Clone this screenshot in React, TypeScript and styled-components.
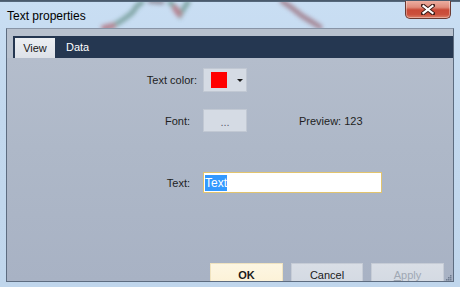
import React from "react";
import styled, { createGlobalStyle } from "styled-components";

const GlobalStyle = createGlobalStyle`
  html, body { margin: 0; padding: 0; }
  body {
    font-family: "Liberation Sans", Arial, sans-serif;
    background: #c3d9ef;
  }
`;

const Window = styled.div`
  width: 460px;
  height: 287px;
  display: flex;
  flex-direction: column;
  background: linear-gradient(180deg, #c9def3 0%, #c2d8ee 40%, #c0d6ec 100%);
  border-top: 1px solid #4a5a6c;
  box-sizing: border-box;
  overflow: hidden;
`;

const TitleBar = styled.div`
  position: relative;
  height: 27px;
  display: flex;
  align-items: center;
  padding: 0 0 0 7px;
  font-size: 12px;
  color: #000;
`;

const Title = styled.span`
  position: relative;
  z-index: 1;
  margin-top: 2px;
`;

const Backdrop = styled.svg`
  position: absolute;
  left: 0;
  top: 0;
  width: 460px;
  height: 27px;
  pointer-events: none;
`;

const CloseButton = styled.div`
  position: absolute;
  right: 9px;
  top: -1px;
  width: 44px;
  height: 18px;
  border: 1px solid #6b3a32;
  border-top: none;
  border-radius: 0 0 5px 5px;
  background: linear-gradient(180deg, #eeb3a6 0%, #e08c7b 40%, #c94a37 55%, #cb503c 80%, #dc8068 100%);
  box-shadow: inset 0 0 0 1px rgba(255, 255, 255, 0.35);
  display: flex;
  align-items: center;
  justify-content: center;
`;

const Frame = styled.div`
  flex: 1;
  display: flex;
  padding: 0 6px 5px 6px;
  min-height: 0;
`;

const Client = styled.div`
  flex: 1;
  display: flex;
  flex-direction: column;
  border: 1px solid #5d6c80;
  border-top-color: #8894a6;
  min-height: 0;
`;

const TabHeader = styled.div`
  background: #b8c1ce;
  padding: 7px 0 0 6px;
`;

const TabBand = styled.div`
  height: 22px;
  background: #253751;
  display: flex;
  align-items: flex-end;
  padding-left: 2px;
`;

const Tab = styled.div<{ $active?: boolean }>`
  height: ${(p) => (p.$active ? "20px" : "22px")};
  width: ${(p) => (p.$active ? "40px" : "auto")};
  padding: ${(p) => (p.$active ? "0" : "0 0 0 11px")};
  display: flex;
  align-items: center;
  justify-content: center;
  font-size: 11px;
  color: ${(p) => (p.$active ? "#151515" : "#ffffff")};
  background: ${(p) => (p.$active ? "linear-gradient(180deg, #eceff3 0%, #dde1e8 100%)" : "transparent")};
  box-sizing: border-box;
`;

const Panel = styled.div`
  flex: 1;
  display: flex;
  flex-direction: column;
  background: linear-gradient(180deg, #b4bdcc 0%, #aeb8c8 40%, #a8b2c4 100%);
  overflow: hidden;
  min-height: 0;
`;

const Row = styled.div<{ $top: number; $height: number }>`
  display: flex;
  align-items: center;
  margin-top: ${(p) => p.$top}px;
  height: ${(p) => p.$height}px;
`;

const Label = styled.div<{ $inset: number }>`
  width: 196px;
  box-sizing: border-box;
  padding-right: ${(p) => p.$inset}px;
  text-align: right;
  font-size: 11px;
  color: #1e1e1e;
`;

const PickerButton = styled.div`
  width: 44px;
  height: 24px;
  box-sizing: border-box;
  background: #d5dbe4;
  border: 1px solid #c1c8d3;
  display: flex;
  align-items: center;
  padding-left: 7px;
  gap: 10px;
`;

const Swatch = styled.div<{ $color: string }>`
  width: 16px;
  height: 16px;
  background: ${(p) => p.$color};
`;

const Caret = styled.div`
  width: 0;
  height: 0;
  border-left: 3px solid transparent;
  border-right: 3px solid transparent;
  border-top: 3px solid #1a1a1a;
`;

const EllipsisButton = styled.div`
  width: 44px;
  height: 23px;
  box-sizing: border-box;
  background: #d5dbe4;
  border: 1px solid #c1c8d3;
  display: flex;
  align-items: center;
  justify-content: center;
  padding-top: 3px;
  font-size: 11px;
  color: #5a6270;
`;

const PreviewText = styled.div`
  margin-left: 52px;
  font-size: 11px;
  color: #1e1e1e;
`;

const TextInput = styled.div`
  width: 179px;
  height: 21px;
  box-sizing: border-box;
  background: #ffffff;
  border: 1px solid #e2c46e;
  display: flex;
  align-items: center;
  padding-left: 1px;
  font-size: 12px;
`;

const Selection = styled.span`
  background: #3399ff;
  color: #ffffff;
  padding: 1px 0;
`;

const ButtonRow = styled.div`
  margin-top: auto;
  margin-bottom: -5px;
  display: flex;
  padding-left: 203px;
  gap: 8px;
  height: 23px;
`;

const DialogButton = styled.div<{ $variant: "default" | "normal" | "disabled"; $width: number }>`
  width: ${(p) => p.$width}px;
  height: 23px;
  box-sizing: border-box;
  display: flex;
  justify-content: center;
  padding-top: 5px;
  font-size: 11px;
  font-weight: ${(p) => (p.$variant === "default" ? 700 : 400)};
  color: ${(p) => (p.$variant === "disabled" ? "#a0a8b4" : "#1a1a1a")};
  background: ${(p) =>
    p.$variant === "default"
      ? "linear-gradient(180deg, #fdf6e2 0%, #fcf1d6 100%)"
      : "linear-gradient(180deg, #d9dee6 0%, #d3d9e2 100%)"};
  border: 1px solid ${(p) => (p.$variant === "default" ? "#f0e3c0" : "#c6ccd6")};
`;

const Grip = styled.svg`
  align-self: flex-start;
  margin-top: 11px;
  margin-left: -7px;
`;

export default function App() {
  return (
    <>
      <GlobalStyle />
      <Window>
        <TitleBar>
          <Backdrop viewBox="0 0 460 27">
            <defs>
              <filter id="blur" x="-20%" y="-80%" width="140%" height="260%">
                <feGaussianBlur stdDeviation="2" />
              </filter>
            </defs>
            <g filter="url(#blur)" fill="none" strokeLinecap="round" strokeWidth="5" opacity="0.6">
              <polyline points="106,27 116,23 124,18 132,12 137,5 142,1" stroke="#4f7f70" />
              <polyline points="104,27 113,25" stroke="#a8464f" strokeWidth="6" />
              <polyline points="150,0 162,1" stroke="#6f5d66" />
              <polyline points="170,1 176,8 180,14 184,7 188,1" stroke="#4f7f70" />
              <polyline points="175,7 179,13" stroke="#a8464f" strokeWidth="6" />
              <polyline points="282,0 292,7 302,15 312,21 320,26" stroke="#8b4852" />
            </g>
            <rect x="0" y="0" width="460" height="1" fill="#55677a" />
          </Backdrop>
          <Title>Text properties</Title>
          <CloseButton>
            <svg width="14" height="11" viewBox="0 0 14 11">
              <path d="M2 1.5 L12 9.5 M12 1.5 L2 9.5" stroke="#3b1a16" strokeWidth="4" strokeLinecap="square" />
              <path d="M2.5 2 L11.5 9 M11.5 2 L2.5 9" stroke="#ffffff" strokeWidth="2.2" strokeLinecap="square" />
            </svg>
          </CloseButton>
        </TitleBar>
        <Frame>
          <Client>
            <TabHeader>
              <TabBand>
                <Tab $active>View</Tab>
                <Tab>Data</Tab>
              </TabBand>
            </TabHeader>
            <Panel>
              <Row $top={10} $height={24}>
                <Label $inset={6}>Text color:</Label>
                <PickerButton>
                  <Swatch $color="#ff0000" />
                  <Caret />
                </PickerButton>
              </Row>
              <Row $top={17} $height={23}>
                <Label $inset={13}>Font:</Label>
                <EllipsisButton>...</EllipsisButton>
                <PreviewText>Preview: 123</PreviewText>
              </Row>
              <Row $top={40} $height={21}>
                <Label $inset={13}>Text:</Label>
                <TextInput>
                  <Selection>Text</Selection>
                </TextInput>
              </Row>
              <ButtonRow>
                <DialogButton $variant="default" $width={73}>OK</DialogButton>
                <DialogButton $variant="normal" $width={72}>Cancel</DialogButton>
                <DialogButton $variant="disabled" $width={73}>
                  <span><u>A</u>pply</span>
                </DialogButton>
                <Grip width="7" height="7" viewBox="0 0 7 7">
                  {[
                    [5, 1],
                    [3, 3], [5, 3],
                    [1, 5], [3, 5], [5, 5],
                  ].map(([x, y]) => (
                    <rect key={`${x}-${y}`} x={x} y={y} width="1.5" height="1.5" fill="#6f7c90" />
                  ))}
                </Grip>
              </ButtonRow>
            </Panel>
          </Client>
        </Frame>
      </Window>
    </>
  );
}
